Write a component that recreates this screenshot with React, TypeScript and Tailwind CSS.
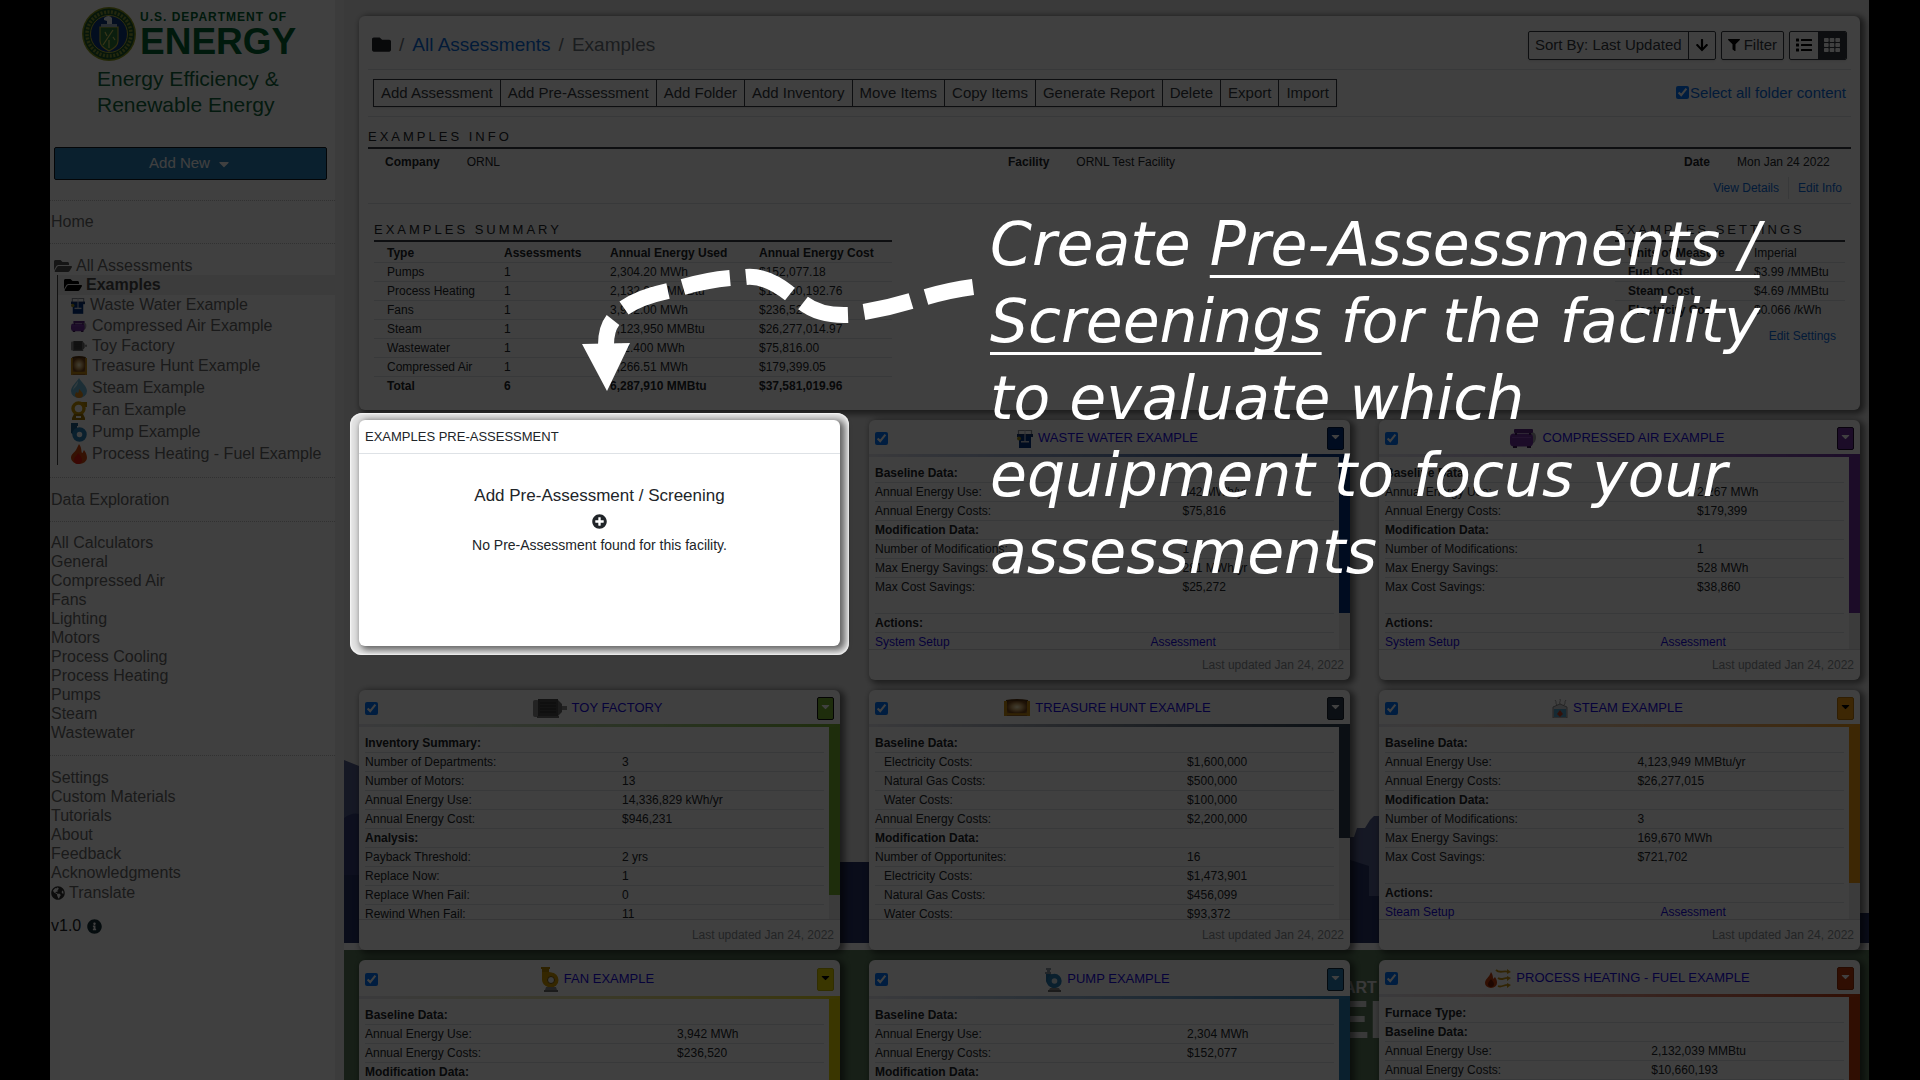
import React from "react";
import {
  FaArrowDown,
  FaCaretDown,
  FaFilter,
  FaFolder,
  FaFolderOpen,
  FaGlobeAmericas,
  FaInfoCircle,
  FaList,
  FaPlusCircle,
  FaTh,
} from "react-icons/fa";

type IconProps = { className?: string };

/* ---------- equipment icons ---------- */

function WasteWaterIcon({ className }: IconProps) {
  return (
    <svg viewBox="0 0 16 19" className={className} aria-hidden="true">
      <path d="M1.5 6V1.5h13V6" fill="none" stroke="#8a8f98" strokeWidth="1.2" />
      <path d="M0 5h16v3H0z" fill="#12306e" />
      <path d="M2 7h12v12H2z" fill="#003080" />
      <path d="M7.4 1.5h1.2v11H7.4z" fill="#c7ccd4" />
      <path d="M4 12h8v1.6H4z" fill="#c7ccd4" />
      <circle cx="2" cy="9.5" r="2" fill="#9a8a20" />
    </svg>
  );
}

function CompressorIcon({ className }: IconProps) {
  return (
    <svg viewBox="0 0 27 19" className={className} preserveAspectRatio="none" aria-hidden="true">
      <path d="M19 4c4-2 7 0 7 4s-2 7-5 7z" fill="#9a9aa4" />
      <rect x="4" y="0" width="19" height="4" rx="1" fill="#5b2785" />
      <rect x="0" y="4.500" width="23" height="13" rx="4" fill="#7030a0" />
      <path d="M3 17h4v2H3zM17 17h4v2h-4zM5 4h2v2H5zM19 4h2v2h-2z" fill="#3c1858" />
      <path d="M2 8h19v1H2z" fill="#8d4dbd" />
    </svg>
  );
}

function MotorIcon({ className }: IconProps) {
  return (
    <svg viewBox="0 0 34 19" className={className} preserveAspectRatio="none" aria-hidden="true">
      <rect x="0" y="1" width="6" height="17" rx="2" fill="#8c8c8c" />
      <rect x="5" y="0" width="20" height="18" fill="#4c4c4c" />
      <path d="M7 4h16M7 7h16M7 10h16M7 13h16" stroke="#303030" strokeWidth="1" />
      <path d="M25 1l4 4v8l-4 4z" fill="#6e6e6e" />
      <rect x="29" y="7" width="5" height="4" fill="#8c8c8c" />
      <rect x="4" y="17" width="22" height="2" fill="#6e6e6e" />
    </svg>
  );
}

function ChestIcon({ className }: IconProps) {
  return (
    <svg viewBox="0 0 26 18" className={className} preserveAspectRatio="none" aria-hidden="true">
      <defs>
        <radialGradient id="chest-glow">
          <stop offset="0" stopColor="#fff3c8" />
          <stop offset="0.5" stopColor="#d0a868" />
          <stop offset="1" stopColor="#7a4a1c" />
        </radialGradient>
      </defs>
      <path d="M2 1q11-2 22 0l1 9H1z" fill="#5a3510" />
      <path d="M0 9h26v9H0z" fill="#9a6526" />
      <rect x="3" y="2" width="20" height="13" rx="4" fill="url(#chest-glow)" />
      <path d="M0 2h3v16H0zM23 2h3v16h-3z" fill="#c58a12" />
      <path d="M0 15h26v2H0z" fill="#c58a12" />
    </svg>
  );
}

function DropIcon({ className }: IconProps) {
  return (
    <svg viewBox="0 0 16 20" className={className} aria-hidden="true">
      <path d="M8 0c2 4 8 8 8 13a8 7 0 0 1-16 0C0 8 6 4 8 0z" fill="#6fb9d6" />
      <path d="M7 3c-2 3-5 6-5 9 2-3 5-4 5-9z" fill="#c4e6f2" />
      <path d="M8 11c2 2 4 4 4 6s-2 3-4 3-4-1-4-3c0-1 1-2 1-3l2 1c1-1 1-3 1-4z" fill="#e08a1e" />
    </svg>
  );
}

function BoilerIcon({ className }: IconProps) {
  return (
    <svg viewBox="0 0 16 19" className={className} aria-hidden="true">
      <path d="M5 6c-2-2 0-3-2-5M8 5c-1-2 1-3 0-5M12 6c2-2 0-3 2-5" fill="none" stroke="#9a9a9a" />
      <path d="M1 8l7-3 7 3v11H1z" fill="#cfd4d8" stroke="#8d8d8d" />
      <path d="M2 10h12v8H2z" fill="#5aa9cf" />
      <path d="M8 11l3 4-3 3-3-3z" fill="#c8452a" />
    </svg>
  );
}

function FanIcon({ className }: IconProps) {
  return (
    <svg viewBox="0 0 18 25" className={className} aria-hidden="true">
      <path d="M0 0h9v2H8v4H1V2H0z" fill="#b88700" />
      <path d="M1 5h7l3 1v14H8c-5-1-7-4-7-8z" fill="#d29a00" />
      <circle cx="10" cy="13" r="7.5" fill="#d29a00" />
      <circle cx="10" cy="13" r="3.5" fill="#efefef" stroke="#7c5a00" />
      <path d="M5 20h10l1 3H4z" fill="#8d8d8d" />
      <path d="M3 23h14v2H3z" fill="#6e6e6e" />
    </svg>
  );
}

function BlowerIcon({ className }: IconProps) {
  return (
    <svg viewBox="0 0 16 19" className={className} aria-hidden="true">
      <path d="M7 1h9v5h-4z" fill="#b88700" />
      <circle cx="7.5" cy="7.5" r="5.5" fill="none" stroke="#c79500" strokeWidth="3.4" />
      <path d="M3 13h9l2 4v2H1v-2z" fill="#a07400" />
      <path d="M5 15h5v2H5z" fill="#fff" />
    </svg>
  );
}

function PumpIcon({ className }: IconProps) {
  return (
    <svg viewBox="0 0 17 25" className={className} aria-hidden="true">
      <path d="M1 1h5v2H1zM2 3h3v3H2zM0 5h6v2H0z" fill="#8d99a4" />
      <path d="M1 7h4l5 1v13c-6 0-8-4-9-7z" fill="#2473a8" />
      <circle cx="9.5" cy="14" r="7.2" fill="#2980b9" />
      <circle cx="9.5" cy="14" r="2.8" fill="#dfe9f0" />
      <path d="M5 21h9l1 2H4z" fill="#8d8d8d" />
      <path d="M3 23h13v2H3z" fill="#6e6e6e" />
    </svg>
  );
}

function PumpGlyph({ className }: IconProps) {
  return (
    <svg viewBox="0 0 16 19" className={className} aria-hidden="true">
      <path d="M0 0h7v3H6v3l-3 6-3-2z" fill="#1d5c88" />
      <circle cx="8.5" cy="11.5" r="5" fill="none" stroke="#2980b9" strokeWidth="4.5" />
    </svg>
  );
}

function FlameIcon({ className }: IconProps) {
  return (
    <svg viewBox="0 0 16 20" className={className} aria-hidden="true">
      <path d="M8 0c3 4 2 7 3 9 1 0 1-2 2-3 3 4 3 7 3 8a8 6 0 0 1-16 0c0-4 3-5 5-8 1-2 2-4 3-6z" fill="#d4480f" />
      <path d="M7 9c3 3 4 5 4 7a4 4 0 0 1-8 0c0-3 3-4 4-7z" fill="#e81c10" />
    </svg>
  );
}

function HeatingIcon({ className }: IconProps) {
  return (
    <svg viewBox="0 0 26 19" className={className} aria-hidden="true">
      <path d="M6 3c2 3 2 5 2 7l2-2c2 3 2 4 2 6a6 5 0 0 1-12 0c0-4 4-5 6-11z" fill="#c8410e" />
      <path d="M6 10c2 2 3 4 3 5a3 3 0 0 1-6 0c0-2 2-3 3-5z" fill="#7a1d04" />
      <path
        d="M11 1c4 4 7 0 13 2M13 9c4 3 6-1 11 0M13 17c4 2 6-2 11-1"
        fill="none"
        stroke="#c79512"
        strokeWidth="1.8"
      />
      <path d="M22 0l4 3-4 2zM22 7l4 2-4 3zM22 14l4 2-4 3z" fill="#c79512" />
    </svg>
  );
}

/* ---------- sidebar ---------- */

function EnergySeal() {
  return (
    <svg viewBox="0 0 54 54" className="size-[54px] shrink-0" aria-hidden="true">
      <circle cx="27" cy="27" r="27" fill="#8c9a1e" />
      <circle cx="27" cy="27" r="25.5" fill="#1c5a2c" />
      <circle
        cx="27"
        cy="27"
        r="22"
        fill="none"
        stroke="#b9b53a"
        strokeWidth="3.5"
        strokeDasharray="2 1.5"
        opacity="0.7"
      />
      <circle cx="27" cy="27" r="18.5" fill="#0f3a80" stroke="#b9b53a" />
      <path d="M18 20h18v14c0 5-5 8-9 10-4-2-9-5-9-10z" fill="#2f7a3a" stroke="#c9bc3c" strokeWidth="1.2" />
      <path d="M21 38l10-15M23 25l2 4M31 30l2 3M27 33v8" stroke="#d8cf62" strokeWidth="1.2" />
      <path d="M22 11q5-4 8 0v6h-5v-3l-3-1z" fill="#e8eef4" />
      <path d="M19 17h16v3H19z" fill="#9fb3c6" />
    </svg>
  );
}

const treeItems = [
  { name: "Waste Water Example", icon: WasteWaterIcon, row: "h-5", size: "w-[14px] h-[17px]" },
  { name: "Compressed Air Example", icon: CompressorIcon, row: "h-[22px]", size: "w-4 h-[11px]" },
  { name: "Toy Factory", icon: MotorIcon, row: "h-[18px]", size: "w-4 h-[10px]" },
  { name: "Treasure Hunt Example", icon: ChestIcon, row: "h-[21px]", size: "w-4 h-[19px]" },
  { name: "Steam Example", icon: DropIcon, row: "h-[23px]", size: "w-4 h-5" },
  { name: "Fan Example", icon: BlowerIcon, row: "h-[22px]", size: "w-4 h-[19px]" },
  { name: "Pump Example", icon: PumpGlyph, row: "h-[22px]", size: "w-4 h-[19px]" },
  { name: "Process Heating - Fuel Example", icon: FlameIcon, row: "h-[22px]", size: "w-4 h-5" },
];

const calculators = [
  "All Calculators",
  "General",
  "Compressed Air",
  "Fans",
  "Lighting",
  "Motors",
  "Process Cooling",
  "Process Heating",
  "Pumps",
  "Steam",
  "Wastewater",
];

const resources = ["Settings", "Custom Materials", "Tutorials", "About", "Feedback", "Acknowledgments"];

function NavLink({ children }: { children: React.ReactNode }) {
  return (
    <a href="#" className="block leading-[19px]">
      {children}
    </a>
  );
}

function Sidebar() {
  return (
    <aside className="w-[294px] shrink-0 border-r-[9px] border-[#f0f0f0] bg-white pt-[7px] text-base text-[#6a6a6a]">
      <div className="ml-8">
        <div className="flex gap-1">
          <EnergySeal />
          <div className="pt-[3px] font-bold text-[#006633]">
            <div className="text-[12px] leading-[14px] tracking-[1px] whitespace-nowrap">U.S. DEPARTMENT OF</div>
            <div className="text-[37px] leading-[35px]">ENERGY</div>
          </div>
        </div>
        <div className="mt-[5px] ml-[15px] text-[21px] leading-[26px] text-[#12683e]">
          Energy Efficiency &amp;
          <br />
          Renewable Energy
        </div>
      </div>

      <button className="mt-[29px] ml-1 flex h-[33px] w-[273px] items-center justify-center gap-1.5 rounded-xs border border-[#101820] bg-[#2980b9] text-[15px] text-white">
        Add New
        <FaCaretDown className="size-4" />
      </button>

      <nav className="mt-5">
        <div className="border-t border-dotted border-[#c4c4c4] pt-[11px] pb-3 pl-px">
          <NavLink>Home</NavLink>
        </div>
        <div className="border-t border-dotted border-[#c4c4c4] pt-3 pb-3">
          <a href="#" className="flex items-center gap-1 pl-1 leading-[19px]">
            <FaFolderOpen className="size-[18px] text-[#555]" />
            All Assessments
          </a>
          <div className="ml-[7px] border-l border-[#444]">
            <a href="#" className="flex h-5 items-center gap-1 bg-[#eeeeee] pl-1.5 font-bold text-[#4a4a4a]">
              <FaFolderOpen className="size-[18px] text-black" />
              Examples
            </a>
            <ul className="pl-[13px]">
              {treeItems.map(({ name, icon: Icon, row, size }) => (
                <li key={name} className={row}>
                  <a href="#" className="flex h-full items-center gap-[5px] whitespace-nowrap">
                    <Icon className={"shrink-0 " + size} />
                    {name}
                  </a>
                </li>
              ))}
            </ul>
          </div>
        </div>
        <div className="border-t border-dotted border-[#c4c4c4] py-3 pl-px">
          <NavLink>Data Exploration</NavLink>
        </div>
        <div className="border-t border-dotted border-[#c4c4c4] pt-[11px] pb-[13px] pl-px">
          {calculators.map((name) => (
            <NavLink key={name}>{name}</NavLink>
          ))}
        </div>
        <div className="border-t border-dotted border-[#c4c4c4] pt-3 pl-px">
          {resources.map((name) => (
            <NavLink key={name}>{name}</NavLink>
          ))}
          <a href="#" className="flex h-[21px] items-center gap-1">
            <FaGlobeAmericas className="size-[14px] text-[#333]" />
            Translate
          </a>
          <div className="mt-3 flex h-[22px] items-center gap-1.5 text-[#212529]">
            v1.0
            <FaInfoCircle className="size-[15px] text-[#17323a]" />
          </div>
        </div>
      </nav>
    </aside>
  );
}

/* ---------- folder panel ---------- */

const folderActions = [
  "Add Assessment",
  "Add Pre-Assessment",
  "Add Folder",
  "Add Inventory",
  "Move Items",
  "Copy Items",
  "Generate Report",
  "Delete",
  "Export",
  "Import",
];

const summary = [
  ["Pumps", "1", "2,304.20 MWh", "$152,077.18"],
  ["Process Heating", "1", "2,132,039 MMBtu", "$10,660,192.76"],
  ["Fans", "1", "3,942.00 MWh", "$236,520.00"],
  ["Steam", "1", "4,123,950 MMBtu", "$26,277,014.97"],
  ["Wastewater", "1", "842.400 MWh", "$75,816.00"],
  ["Compressed Air", "1", "2,266.51 MWh", "$179,399.05"],
];

const settings = [
  ["Units of Measure", "Imperial"],
  ["Fuel Cost", "$3.99 /MMBtu"],
  ["Steam Cost", "$4.69 /MMBtu"],
  ["Electricity Cost", "$0.066 /kWh"],
];

const sectionHeading =
  "border-b-2 border-[#343a40] pb-px text-[13px] leading-[18px] tracking-[3px] whitespace-nowrap uppercase";

function FolderPanel() {
  return (
    <section className="rounded-md bg-white px-[9px] pb-[15px] text-xs shadow-[3px_2px_6px_2px_rgba(0,0,0,0.55)]">
      <div className="flex h-[54px] items-center justify-between border-b border-[#dee2e6] pt-1 pr-1 pl-1">
        <nav aria-label="Breadcrumb" className="flex items-center gap-2 text-[19px] text-[#6c757d]">
          <FaFolder className="size-[19px] text-[#212529]" />
          <span>/</span>
          <a href="#" className="text-[#0a6be0]">
            All Assessments
          </a>
          <span>/</span>
          <span>Examples</span>
        </nav>
        <div className="flex gap-[5px] pt-px text-[15px] text-[#343a40]">
          <div className="flex h-[29px] rounded-xs border border-[#343a40] shadow-sm">
            <button className="border-r border-[#343a40] px-1.5">Sort By: Last Updated</button>
            <button aria-label="Sort descending" className="px-1.5">
              <FaArrowDown className="size-[14px] text-black" />
            </button>
          </div>
          <button className="flex h-[29px] items-center gap-1 rounded-xs border border-[#343a40] px-1.5 shadow-sm">
            <FaFilter className="size-3 text-black" />
            Filter
          </button>
          <div className="flex h-[29px] overflow-hidden rounded-xs border border-[#343a40] shadow-sm">
            <button aria-label="List view" className="px-1.5">
              <FaList className="size-4 text-black" />
            </button>
            <button aria-label="Grid view" className="bg-[#343a40] px-1.5">
              <FaTh className="size-4 text-white" />
            </button>
          </div>
        </div>
      </div>

      <div className="flex h-[47px] items-center justify-between border-b border-[#dee2e6] pr-[5px] pl-[5px] text-[15px]">
        <div className="flex shadow-sm">
          {folderActions.map((name) => (
            <button
              key={name}
              className="-ml-px h-7 border border-[#343a40] px-[7px] whitespace-nowrap text-[#343a40] first:ml-0"
            >
              {name}
            </button>
          ))}
        </div>
        <label className="flex items-center gap-px text-[#0a6be0]">
          <input type="checkbox" defaultChecked className="size-[13px] accent-[#0075ff]" />
          Select all folder content
        </label>
      </div>

      <div className="border-b border-[#dee2e6] pt-[11px]">
        <h2 className={sectionHeading}>Examples Info</h2>
        <dl className="grid h-[26px] grid-cols-[623fr_676fr_167fr] items-center pl-[17px] whitespace-nowrap">
          <div className="flex gap-[27px]">
            <dt className="font-bold">Company</dt>
            <dd>ORNL</dd>
          </div>
          <div className="flex gap-[27px]">
            <dt className="font-bold">Facility</dt>
            <dd>ORNL Test Facility</dd>
          </div>
          <div className="flex gap-[27px]">
            <dt className="font-bold">Date</dt>
            <dd>Mon Jan 24 2022</dd>
          </div>
        </dl>
        <div className="flex h-7 items-center justify-end pr-[9px] pb-0.5 text-[#0a6be0]">
          <a href="#" className="border-r border-[#dee2e6] pr-[9px] leading-[22px]">
            View Details
          </a>
          <a href="#" className="pl-[9px]">
            Edit Info
          </a>
        </div>
      </div>

      <div className="flex justify-between pt-[17px] pr-1.5 pl-1.5">
        <div className="w-[518px]">
          <h2 className={sectionHeading}>Examples Summary</h2>
          <table className="mt-0.5 w-full table-fixed text-left leading-[18px] whitespace-nowrap">
            <thead>
              <tr className="border-b border-[#dee2e6]">
                <th className="w-[117px] pl-[13px]">Type</th>
                <th className="w-[106px] pl-[13px]">Assessments</th>
                <th className="w-[149px] pl-[13px]">Annual Energy Used</th>
                <th className="pl-[13px]">Annual Energy Cost</th>
              </tr>
            </thead>
            <tbody>
              {summary.map((cells) => (
                <tr key={cells[0]} className="border-b border-[#dee2e6]">
                  {cells.map((cell, i) => (
                    <td key={i} className="pl-[13px]">
                      {cell}
                    </td>
                  ))}
                </tr>
              ))}
            </tbody>
            <tfoot>
              <tr className="font-bold">
                <td className="pl-[13px]">Total</td>
                <td className="pl-[13px]">6</td>
                <td className="pl-[13px]">6,287,910 MMBtu</td>
                <td className="pl-[13px]">$37,581,019.96</td>
              </tr>
            </tfoot>
          </table>
        </div>
        <div className="w-[230px]">
          <h2 className={sectionHeading}>Examples Settings</h2>
          <table className="mt-0.5 w-full table-fixed text-left leading-[18px] whitespace-nowrap">
            <tbody>
              {settings.map(([label, value]) => (
                <tr key={label} className="border-b border-[#dee2e6] last:border-b-0">
                  <th className="w-[126px] pl-[13px]">{label}</th>
                  <td className="pl-[13px]">{value}</td>
                </tr>
              ))}
            </tbody>
          </table>
          <div className="pr-[9px] text-right leading-[34px]">
            <a href="#" className="text-[#0a6be0]">
              Edit Settings
            </a>
          </div>
        </div>
      </div>
    </section>
  );
}

/* ---------- assessment cards ---------- */

type Row = { label: string; value?: string; kind?: "head" | "indent" | "last" };

type CardData = {
  title: string;
  icon: React.ComponentType<IconProps>;
  iconSize: string;
  header: string;
  rule: string;
  fill: string;
  caret: string;
  thumb: string;
  col: string;
  rows: Row[];
  setup?: string;
};

const head = (label: string): Row => ({ label, kind: "head" });

const cards: CardData[] = [
  {
    title: "Waste Water Example",
    icon: WasteWaterIcon,
    iconSize: "w-4 h-[19px]",
    header: "h-[34px]",
    rule: "to-[#003080]",
    fill: "bg-[#003080]",
    caret: "border-[#001a40] text-white",
    thumb: "h-[156px]",
    col: "w-[67%]",
    rows: [
      head("Baseline Data:"),
      { label: "Annual Energy Use:", value: "842 MWh/yr" },
      { label: "Annual Energy Costs:", value: "$75,816" },
      head("Modification Data:"),
      { label: "Number of Modifications:", value: "1" },
      { label: "Max Energy Savings:", value: "281 MWh/yr" },
      { label: "Max Cost Savings:", value: "$25,272", kind: "last" },
    ],
    setup: "System Setup",
  },
  {
    title: "Compressed Air Example",
    icon: CompressorIcon,
    iconSize: "w-[27px] h-[19px]",
    header: "h-[34px]",
    rule: "to-[#7030a0]",
    fill: "bg-[#7030a0]",
    caret: "border-[#200a30] text-white",
    thumb: "h-[156px]",
    col: "w-[68%]",
    rows: [
      head("Baseline Data:"),
      { label: "Annual Energy Use:", value: "2,267 MWh" },
      { label: "Annual Energy Costs:", value: "$179,399" },
      head("Modification Data:"),
      { label: "Number of Modifications:", value: "1" },
      { label: "Max Energy Savings:", value: "528 MWh" },
      { label: "Max Cost Savings:", value: "$38,860", kind: "last" },
    ],
    setup: "System Setup",
  },
  {
    title: "Toy Factory",
    icon: MotorIcon,
    iconSize: "w-[34px] h-[19px]",
    header: "h-[34px]",
    rule: "to-[#7ab530]",
    fill: "bg-[#7ab530]",
    caret: "border-[#101010] text-white",
    thumb: "h-[168px]",
    col: "w-[56%]",
    rows: [
      head("Inventory Summary:"),
      { label: "Number of Departments:", value: "3" },
      { label: "Number of Motors:", value: "13" },
      { label: "Annual Energy Use:", value: "14,336,829 kWh/yr" },
      { label: "Annual Energy Cost:", value: "$946,231" },
      head("Analysis:"),
      { label: "Payback Threshold:", value: "2 yrs" },
      { label: "Replace Now:", value: "1" },
      { label: "Replace When Fail:", value: "0" },
      { label: "Rewind When Fail:", value: "11" },
    ],
  },
  {
    title: "Treasure Hunt Example",
    icon: ChestIcon,
    iconSize: "w-[26px] h-[17px]",
    header: "h-[34px]",
    rule: "to-[#2c3e50]",
    fill: "bg-[#2c3e50]",
    caret: "border-[#18222c] text-white",
    thumb: "h-[111px]",
    col: "w-[68%]",
    rows: [
      head("Baseline Data:"),
      { label: "Electricity Costs:", value: "$1,600,000", kind: "indent" },
      { label: "Natural Gas Costs:", value: "$500,000", kind: "indent" },
      { label: "Water Costs:", value: "$100,000", kind: "indent" },
      { label: "Annual Energy Costs:", value: "$2,200,000" },
      head("Modification Data:"),
      { label: "Number of Opportunites:", value: "16" },
      { label: "Electricity Costs:", value: "$1,473,901", kind: "indent" },
      { label: "Natural Gas Costs:", value: "$456,099", kind: "indent" },
      { label: "Water Costs:", value: "$93,372", kind: "indent" },
    ],
  },
  {
    title: "Steam Example",
    icon: BoilerIcon,
    iconSize: "w-4 h-[19px]",
    header: "h-[34px]",
    rule: "to-[#f39c12]",
    fill: "bg-[#f39c12]",
    caret: "border-[#c07a08] text-black",
    thumb: "h-[156px]",
    col: "w-[55%]",
    rows: [
      head("Baseline Data:"),
      { label: "Annual Energy Use:", value: "4,123,949 MMBtu/yr" },
      { label: "Annual Energy Costs:", value: "$26,277,015" },
      head("Modification Data:"),
      { label: "Number of Modifications:", value: "3" },
      { label: "Max Energy Savings:", value: "169,670 MWh" },
      { label: "Max Cost Savings:", value: "$721,702", kind: "last" },
    ],
    setup: "Steam Setup",
  },
  {
    title: "Fan Example",
    icon: FanIcon,
    iconSize: "w-[18px] h-[25px]",
    header: "h-[36px]",
    rule: "to-[#e6d800]",
    fill: "bg-[#e6d800]",
    caret: "border-[#c4b800] text-black",
    thumb: "h-[156px]",
    col: "w-[68%]",
    rows: [
      head("Baseline Data:"),
      { label: "Annual Energy Use:", value: "3,942 MWh" },
      { label: "Annual Energy Costs:", value: "$236,520" },
      head("Modification Data:"),
    ],
  },
  {
    title: "Pump Example",
    icon: PumpIcon,
    iconSize: "w-[17px] h-[25px]",
    header: "h-[36px]",
    rule: "to-[#2980b9]",
    fill: "bg-[#2980b9]",
    caret: "border-[#102a3c] text-white",
    thumb: "h-[156px]",
    col: "w-[68%]",
    rows: [
      head("Baseline Data:"),
      { label: "Annual Energy Use:", value: "2,304 MWh" },
      { label: "Annual Energy Costs:", value: "$152,077" },
      head("Modification Data:"),
    ],
  },
  {
    title: "Process Heating - Fuel Example",
    icon: HeatingIcon,
    iconSize: "w-[26px] h-[19px]",
    header: "h-[34px]",
    rule: "to-[#c03a08]",
    fill: "bg-[#c03a08]",
    caret: "border-[#962c04] text-white",
    thumb: "h-[156px]",
    col: "w-[58%]",
    rows: [
      head("Furnace Type:"),
      head("Baseline Data:"),
      { label: "Annual Energy Use:", value: "2,132,039 MMBtu" },
      { label: "Annual Energy Costs:", value: "$10,660,193" },
    ],
  },
];

function AssessmentCard({ card }: { card: CardData }) {
  const Icon = card.icon;
  return (
    <article className="flex h-[260px] flex-col overflow-hidden rounded-md bg-white text-xs shadow-[3px_2px_6px_2px_rgba(0,0,0,0.5)]">
      <header className={"flex shrink-0 items-center justify-between px-1.5 pt-0.5 " + card.header}>
        <input
          type="checkbox"
          defaultChecked
          aria-label={"Select " + card.title}
          className="size-[13px] accent-[#0075ff]"
        />
        <a href="#" className="flex items-center gap-[5px] text-[13px] text-[#1a08e8] uppercase">
          <Icon className={card.iconSize} />
          {card.title}
        </a>
        <button
          aria-label={"Options for " + card.title}
          className={
            "flex h-[23px] w-[17px] items-center justify-center rounded-xs border pb-1 " + card.fill + " " + card.caret
          }
        >
          <FaCaretDown className="size-[13px] shrink-0" />
        </button>
      </header>
      <div className={"h-[3px] shrink-0 bg-linear-to-r from-[#e8e8f0] " + card.rule} />
      <div className="flex min-h-0 flex-1 overflow-hidden">
        <div className="mr-[5px] min-w-0 flex-1 pt-[7px] pl-1.5">
          <table className="w-full table-fixed text-left leading-[18px] whitespace-nowrap">
            <colgroup>
              <col className={card.col} />
              <col />
            </colgroup>
            <tbody>
              {card.rows.map((row, i) =>
                row.kind === "head" ? (
                  <tr key={i} className="border-b border-[#dee2e6]">
                    <th colSpan={2}>{row.label}</th>
                  </tr>
                ) : (
                  <tr key={i} className="border-b border-[#dee2e6]">
                    <td
                      className={
                        row.kind === "indent" ? "pl-[9px]" : row.kind === "last" ? "pb-[17px]" : "pl-0"
                      }
                    >
                      {row.label}
                    </td>
                    <td className={row.kind === "last" ? "pb-[17px]" : "pb-0"}>{row.value}</td>
                  </tr>
                ),
              )}
            </tbody>
          </table>
          {card.setup && (
            <div className="leading-[18px]">
              <div className="border-b border-[#dee2e6] font-bold">Actions:</div>
              <div className="grid grid-cols-[60%_40%] text-[#1a08e8]">
                <a href="#">{card.setup}</a>
                <a href="#">Assessment</a>
              </div>
            </div>
          )}
        </div>
        <div className="w-[11px] bg-[#ececec]">
          <div className={card.thumb + " " + card.fill} />
        </div>
      </div>
      <footer className="shrink-0 border-t border-[#d5d8db] pr-1.5 text-right leading-[30px] text-[#8a8f94]">
        Last updated Jan 24, 2022
      </footer>
    </article>
  );
}

function PreAssessmentCard() {
  return (
    <div className="relative z-20 h-[226px]">
      <div className="absolute -inset-x-[9px] -top-[7px] -bottom-[9px] rounded-xl bg-[#e2e2e2] shadow-[inset_0_0_2px_1px_#fafafa]" />
      <article className="relative h-full rounded-md bg-white text-[#212529] shadow-[3px_2px_6px_2px_rgba(0,0,0,0.55)]">
        <h3 className="border-b border-[#dee2e6] pl-1.5 text-[13px] leading-[33px] uppercase">
          Examples Pre-Assessment
        </h3>
        <div className="flex flex-col items-center pt-[30px]">
          <div className="text-[17px] leading-6">Add Pre-Assessment / Screening</div>
          <button aria-label="Add pre-assessment" className="my-1.5">
            <FaPlusCircle className="size-[15px]" />
          </button>
          <div className="text-[14px] leading-5">No Pre-Assessment found for this facility.</div>
        </div>
      </article>
    </div>
  );
}

/* ---------- backdrop and callout ---------- */

function Backdrop() {
  return (
    <svg
      viewBox="0 0 1525 1080"
      preserveAspectRatio="none"
      className="absolute inset-0 size-full"
      aria-hidden="true"
    >
      <path d="M0 760l15 6v177H0z" fill="#555f90" />
      <path d="M0 818q8-6 15-4v129H0z" fill="#363f78" />
      <path d="M0 875h15v68H0z" fill="#283468" />
      <path d="M480 862h60v81h-60z" fill="#283468" />
      <path d="M1000 943V837h10l3-9h8l5-8 4-4h20v127z" fill="#555f90" />
      <path d="M1000 943V858l25 8v30h20v47z" fill="#283468" />
      <path d="M1515 943v-30h10v30z" fill="#283468" />
      <path d="M0 943h1525v7H0z" fill="#ffffff" />
      <path d="M0 950h1525v130H0z" fill="#5c7c5c" />
      <g fill="#e4e4e4" fontFamily="Liberation Sans" fontWeight="700">
        <text x="1000" y="993" fontSize="16">
          ART
        </text>
        <text x="990" y="1038" fontSize="53">
          EN
        </text>
      </g>
    </svg>
  );
}

function Arrow() {
  return (
    <svg viewBox="0 0 400 130" className="absolute top-[265px] left-[580px] z-30 h-[130px] w-[400px]" aria-hidden="true">
      <g fill="none" stroke="#ffffff" strokeWidth="16">
        <path d="M346 32Q370 25 393 22" />
        <path d="M284 47Q308 43 331 36" />
        <path d="M223 38Q240 51 268 50" />
        <path d="M166 12Q186 10 210 29" />
        <path d="M103 22Q127 15 150 13" />
        <path d="M44 43Q60 32 88 26" />
        <path d="M33 55Q26 64 26 80" />
      </g>
      <path d="M2 79L50 78L27 126z" fill="#ffffff" />
    </svg>
  );
}

function Callout() {
  return (
    <p className="absolute top-[206px] left-[990px] z-30 font-['Ink_Free','DejaVu_Sans',sans-serif] text-[60px] leading-[77px] whitespace-nowrap text-white italic">
      Create{" "}
      <span className="underline decoration-[3px] underline-offset-[10px] [text-decoration-skip-ink:none]">
        Pre-Assessments /
        <br />
        Screenings
      </span>{" "}
      for the facility
      <br />
      to evaluate which
      <br />
      equipment to focus your
      <br />
      assessments
    </p>
  );
}

export default function App() {
  return (
    <div className="relative h-screen overflow-hidden bg-black pr-[51px] pl-[50px] font-['Liberation_Sans',Arial,sans-serif] text-[#212529]">
      <div className="flex h-full">
        <Sidebar />
        <main className="relative min-w-0 flex-1 overflow-hidden bg-[#e8e8e8] pt-4 pr-[9px] pl-[15px]">
          <Backdrop />
          <div className="relative">
            <FolderPanel />
            <div className="mt-[10px] grid grid-cols-3 gap-x-[29px] gap-y-[10px]">
              <PreAssessmentCard />
              {cards.map((card) => (
                <AssessmentCard key={card.title} card={card} />
              ))}
            </div>
          </div>
        </main>
      </div>
      <div className="pointer-events-none absolute inset-0 z-10 bg-black/75" />
      <Arrow />
      <Callout />
    </div>
  );
}
